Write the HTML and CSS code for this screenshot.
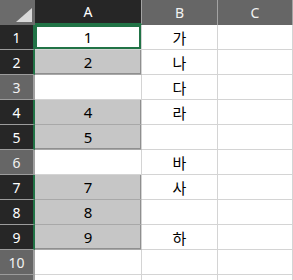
FILE: index.html
```html
<!DOCTYPE html>
<html lang="ko">
<head>
  <meta charset="UTF-8" />
  <title>Sheet1</title>
  <link rel="stylesheet" href="styles.css">
</head>
<body>
  <div class="sheet">
    <div class="corner"></div>
    <div class="col-head sel">A</div>
    <div class="col-head">B</div>
    <div class="col-head">C</div>

    <div class="row-head sel">1</div>
    <div class="cell active">1</div>
    <div class="cell">가</div>
    <div class="cell"></div>

    <div class="row-head sel">2</div>
    <div class="cell sel last">2</div>
    <div class="cell">나</div>
    <div class="cell"></div>

    <div class="row-head">3</div>
    <div class="cell"></div>
    <div class="cell">다</div>
    <div class="cell"></div>

    <div class="row-head sel">4</div>
    <div class="cell sel">4</div>
    <div class="cell">라</div>
    <div class="cell"></div>

    <div class="row-head sel">5</div>
    <div class="cell sel last">5</div>
    <div class="cell"></div>
    <div class="cell"></div>

    <div class="row-head">6</div>
    <div class="cell"></div>
    <div class="cell">바</div>
    <div class="cell"></div>

    <div class="row-head sel">7</div>
    <div class="cell sel">7</div>
    <div class="cell">사</div>
    <div class="cell"></div>

    <div class="row-head sel">8</div>
    <div class="cell sel">8</div>
    <div class="cell"></div>
    <div class="cell"></div>

    <div class="row-head sel">9</div>
    <div class="cell sel last">9</div>
    <div class="cell">하</div>
    <div class="cell"></div>

    <div class="row-head">10</div>
    <div class="cell"></div>
    <div class="cell"></div>
    <div class="cell"></div>

    <!-- row 11 only peeks in at the bottom edge -->
    <div class="row-head"></div>
    <div class="cell"></div>
    <div class="cell"></div>
    <div class="cell"></div>
  </div>
</body>
</html>
```

FILE: styles.css
```css
body {
  margin: 0;
  background: #ffffff;
  overflow: hidden;
  font-family: "Noto Sans", "Noto Sans CJK KR", sans-serif;
}
.sheet {
  display: grid;
  grid-template-columns: 35px 107px 76px 75px;
  grid-auto-rows: 25px;
}
.sheet > div {
  box-sizing: border-box;
  display: flex;
  align-items: center;
  justify-content: center;
}
.corner {
  background: #6b6b6b;
  position: relative;
}
.corner::after {
  content: "";
  position: absolute;
  left: 16px;
  top: 8px;
  width: 16px;
  height: 14px;
  background: #d9d9d9;
  clip-path: polygon(100% 0, 100% 100%, 0 100%);
}
.col-head {
  background: #666666;
  color: #f2f2f2;
  font-size: 14px;
  border-right: 1px solid #a3a3a3;
}
.col-head.sel {
  background: #262626;
  color: #ffffff;
  border-bottom: 2px solid #217346;
}
.row-head {
  background: #666666;
  color: #f2f2f2;
  font-size: 14px;
  border-bottom: 1px solid #9c9c9c;
  border-right: 2px solid #a0a0a0;
}
.row-head.sel {
  background: #262626;
  color: #ffffff;
  border-right-color: #217346;
}
.cell {
  color: #000000;
  font-size: 15px;
  border-right: 1px solid #d4d4d4;
  border-bottom: 1px solid #d4d4d4;
}
.cell.sel {
  background: #c6c6c6;
  border-bottom-color: #a8a8a8;
  box-shadow: inset -1px 0 #8f8f8f;
}
.cell.sel.last {
  box-shadow: inset -1px -1px #8f8f8f;
}
.cell.active {
  box-shadow: inset 0 0 0 2px #217346;
}
```
